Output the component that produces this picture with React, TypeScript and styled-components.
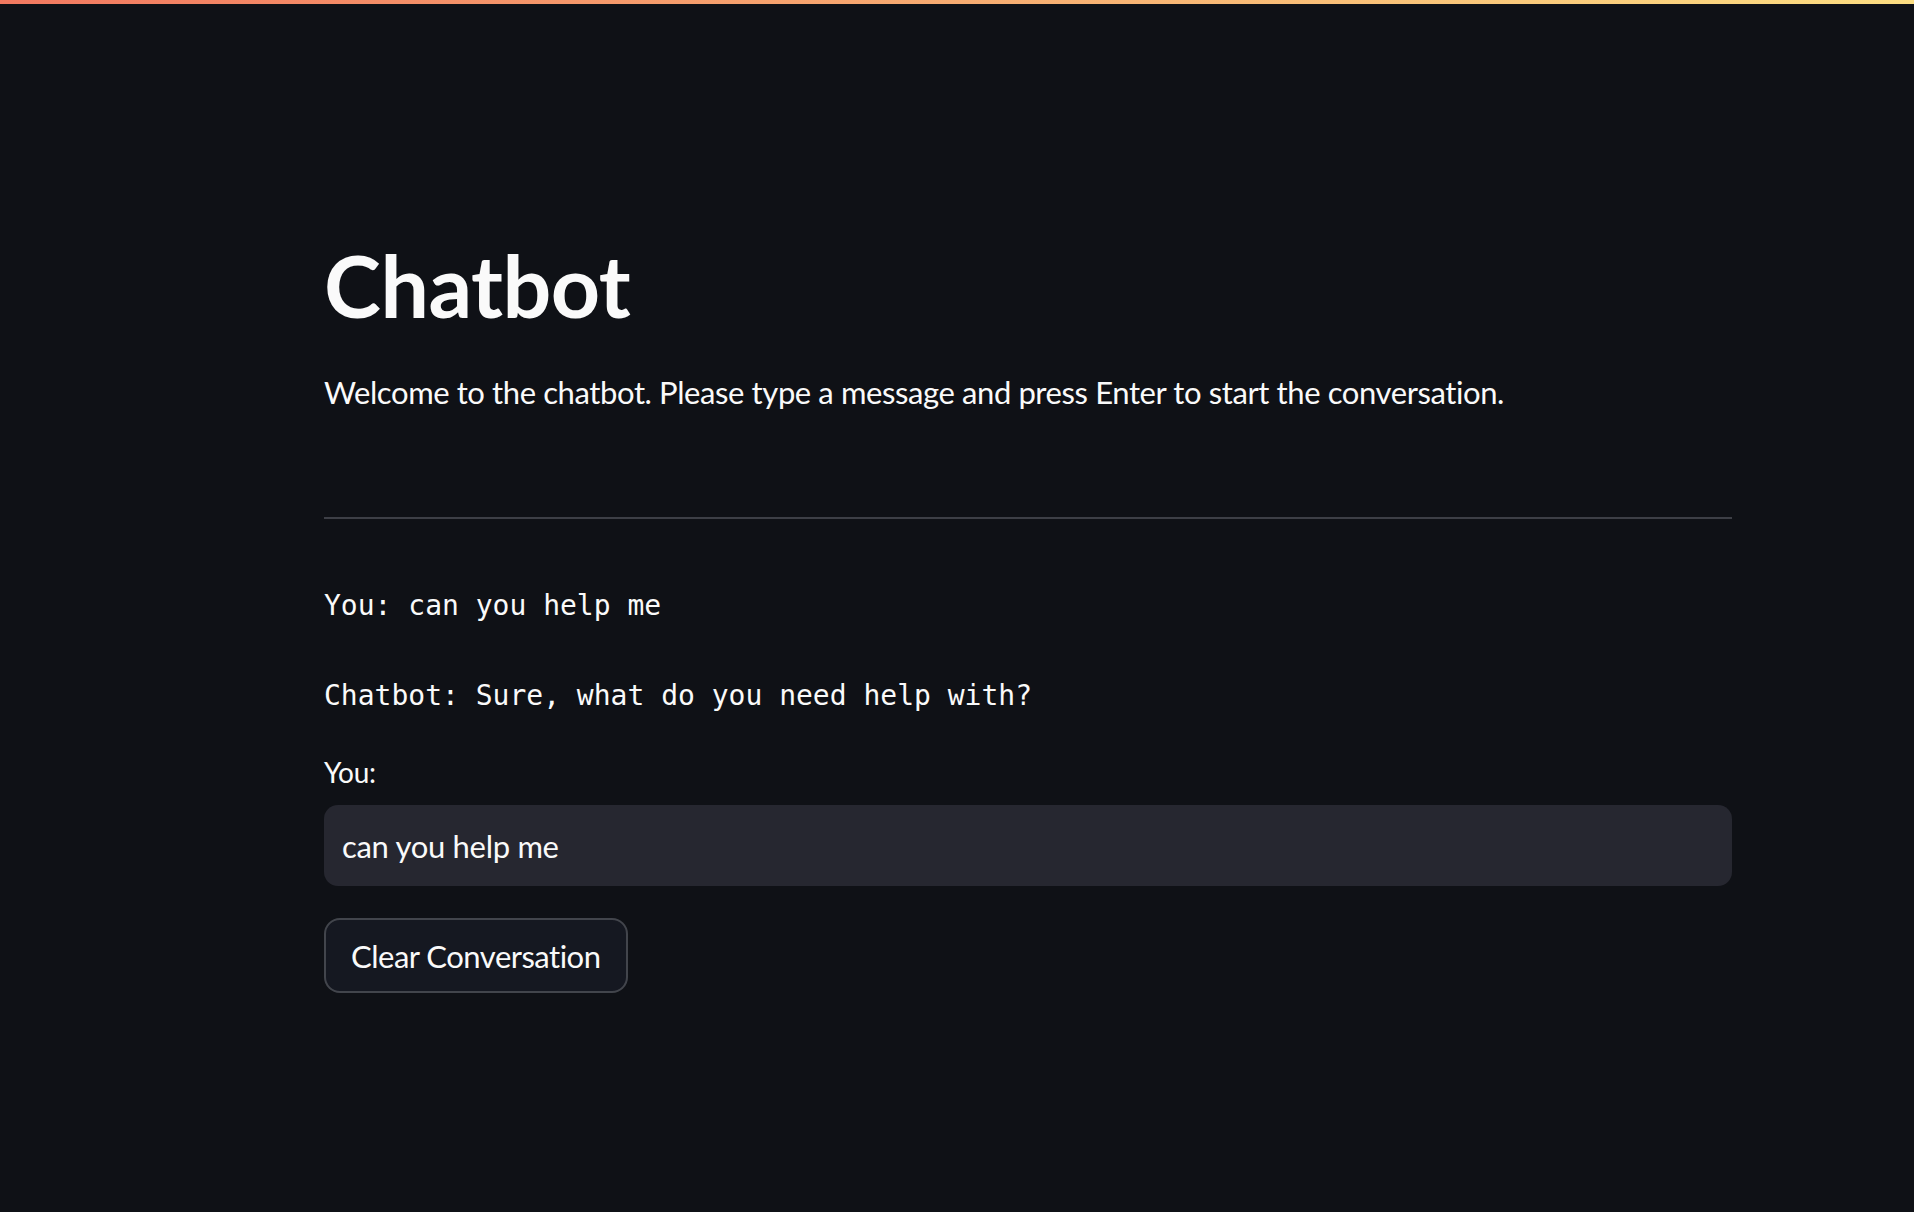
import React, { useState } from 'react';
import styled, { createGlobalStyle } from 'styled-components';

const GlobalStyle = createGlobalStyle`
  html, body {
    margin: 0;
    padding: 0;
    background-color: #0f1116;
  }
  body {
    font-family: Lato, "Noto Sans", sans-serif;
    color: rgb(250, 250, 250);
  }
`;

const Page = styled.div`
  min-height: 1212px;
  background-color: #0f1116;
`;

const Decoration = styled.div`
  height: 4px;
  background: linear-gradient(90deg, rgb(242, 121, 96), rgb(252, 222, 130));
`;

const Main = styled.main`
  width: 1408px;
  margin: 0 0 0 324px;
  padding: 229px 0 0 0;
  display: flex;
  flex-direction: column;
`;

const Title = styled.h1`
  margin: 0;
  font-family: Lato, sans-serif;
  font-weight: 700;
  font-size: 86px;
  line-height: 103px;
  letter-spacing: -0.5px;
`;

const Intro = styled.p`
  margin: 31px 0 0 0;
  font-size: 31px;
  line-height: 51px;
  letter-spacing: -0.4px;
`;

const Divider = styled.hr`
  margin: 99px 0 0 0;
  border: none;
  height: 2px;
  background-color: #3d3f46;
`;

const MonoLine = styled.div<{ $gap: number }>`
  margin-top: ${p => p.$gap}px;
  font-family: "DejaVu Sans Mono", "Liberation Mono", monospace;
  font-size: 28px;
  line-height: 39px;
  white-space: pre;
`;

const Field = styled.label`
  margin-top: 40px;
  display: flex;
  flex-direction: column;
  gap: 16px;
`;

const FieldLabel = styled.span`
  font-size: 28px;
  line-height: 34px;
  letter-spacing: -0.3px;
`;

const TextInput = styled.input`
  box-sizing: border-box;
  height: 81px;
  width: 100%;
  padding: 0 18px;
  border: none;
  border-radius: 14px;
  background-color: #262730;
  color: rgb(250, 250, 250);
  font-family: Lato, sans-serif;
  font-size: 31px;
  letter-spacing: -0.3px;
  outline: none;
`;

const SecondaryButton = styled.button`
  align-self: flex-start;
  margin-top: 32px;
  box-sizing: border-box;
  height: 75px;
  padding: 0 25px;
  border: 2px solid rgba(250, 250, 250, 0.2);
  border-radius: 16px;
  background-color: #151821;
  color: rgb(250, 250, 250);
  font-family: Lato, sans-serif;
  font-size: 31px;
  letter-spacing: -0.5px;
  cursor: pointer;
`;

export default function App() {
  const [message, setMessage] = useState('can you help me');
  const [history, setHistory] = useState<string[]>([
    'You: can you help me',
    'Chatbot: Sure, what do you need help with?',
  ]);

  return (
    <Page>
      <GlobalStyle />
      <Decoration />
      <Main>
        <Title>Chatbot</Title>
        <Intro>
          Welcome to the chatbot. Please type a message and press Enter to start the conversation.
        </Intro>
        <Divider />
        {history.map((line, i) => (
          <MonoLine key={i} $gap={i === 0 ? 67 : 51}>
            {line}
          </MonoLine>
        ))}
        <Field>
          <FieldLabel>You:</FieldLabel>
          <TextInput value={message} onChange={e => setMessage(e.target.value)} />
        </Field>
        <SecondaryButton onClick={() => setHistory([])}>Clear Conversation</SecondaryButton>
      </Main>
    </Page>
  );
}
